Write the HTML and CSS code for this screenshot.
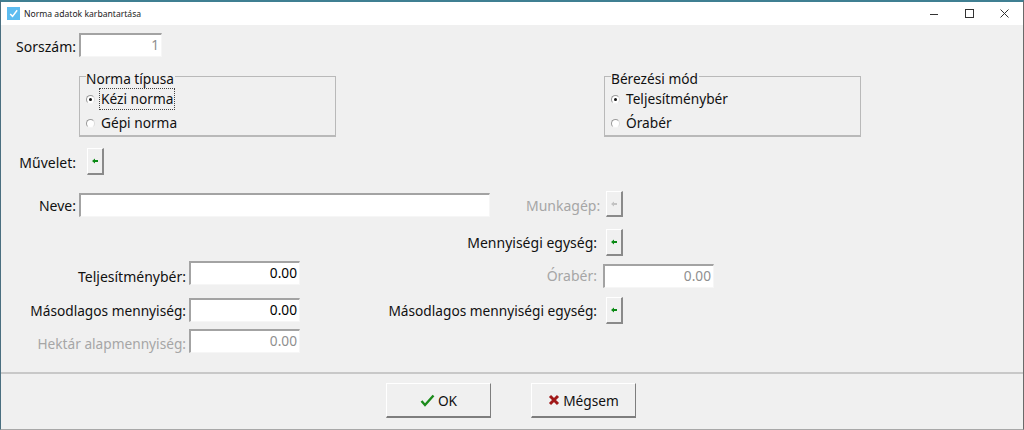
FILE: index.html
```html
<!DOCTYPE html>
<html lang="hu">
<head>
<meta charset="utf-8">
<title>Norma adatok karbantartása</title>
<link rel="stylesheet" href="styles.css">
</head>
<body>
<div class="window">
  <header class="titlebar">
    <svg class="app-icon" width="13" height="13" viewBox="0 0 16 16"><rect width="16" height="16" fill="#5cbcf0"/><path d="M4 8.500l2.800 3L12.500 4" fill="none" stroke="#fff" stroke-width="1.800"/></svg>
    <span class="title">Norma adatok karbantartása</span>
    <div class="winbtns">
      <svg width="12" height="12" viewBox="0 0 12 12"><path d="M1 6.500h8" stroke="#333" fill="none"/></svg>
      <svg width="12" height="12" viewBox="0 0 12 12"><rect x="1.500" y="1.500" width="8" height="8" stroke="#333" fill="none"/></svg>
      <svg width="12" height="12" viewBox="0 0 12 12"><path d="M1.500 1.500l8 8M9.500 1.500l-8 8" stroke="#333" fill="none"/></svg>
    </div>
  </header>
  <main class="form">
    <div class="row row-sorszam">
      <label class="lbl lbl-main">Sorszám:</label>
      <div class="field field-small disabled">1</div>
    </div>
    <div class="groups">
      <div class="group">
        <span class="legend">Norma típusa</span>
        <div class="radio"><span class="dot on"></span><span class="focus">Kézi norma</span></div>
        <div class="radio"><span class="dot"></span><span class="plain">Gépi norma</span></div>
      </div>
      <div class="group">
        <span class="legend">Bérezési mód</span>
        <div class="radio"><span class="dot on"></span><span class="plain">Teljesítménybér</span></div>
        <div class="radio"><span class="dot"></span><span class="plain">Órabér</span></div>
      </div>
    </div>
    <div class="row row-muvelet">
      <label class="lbl lbl-main">Művelet:</label>
      <button class="pick pick-muvelet"><svg class="arrow" width="6" height="6" viewBox="0 0 6 6"><path d="M0 3L3 .5V2H6V4H3V5.500Z"/></svg></button>
    </div>
    <div class="row row-neve">
      <label class="lbl lbl-main">Neve:</label>
      <div class="field field-wide"></div>
      <label class="lbl lbl-right muted">Munkagép:</label>
      <button class="pick"><svg class="arrow off" width="6" height="6" viewBox="0 0 6 6"><path d="M0 3L3 .5V2H6V4H3V5.500Z"/></svg></button>
    </div>
    <div class="lower">
      <div class="col-left">
        <div class="lrow lrow-1">
          <label class="lbl lbl-left">Teljesítménybér:</label>
          <div class="field field-num">0.00</div>
        </div>
        <div class="lrow lrow-2">
          <label class="lbl lbl-left lbl-long">Másodlagos mennyiség:</label>
          <div class="field field-num">0.00</div>
        </div>
        <div class="lrow lrow-3">
          <label class="lbl lbl-left lbl-long muted">Hektár alapmennyiség:</label>
          <div class="field field-num disabled">0.00</div>
        </div>
      </div>
      <div class="col-right">
        <div class="rrow rrow-1">
          <label class="lbl lbl-r">Mennyiségi egység:</label>
          <button class="pick"><svg class="arrow" width="6" height="6" viewBox="0 0 6 6"><path d="M0 3L3 .5V2H6V4H3V5.500Z"/></svg></button>
        </div>
        <div class="rrow rrow-2">
          <label class="lbl lbl-r muted">Órabér:</label>
          <div class="field field-num disabled">0.00</div>
        </div>
        <div class="rrow rrow-3">
          <label class="lbl lbl-r lbl-long">Másodlagos mennyiségi egység:</label>
          <button class="pick"><svg class="arrow" width="6" height="6" viewBox="0 0 6 6"><path d="M0 3L3 .5V2H6V4H3V5.500Z"/></svg></button>
        </div>
      </div>
    </div>
  </main>
  <footer class="footer">
    <button class="btn btn-ok">
      <svg width="15" height="13" viewBox="0 0 15 13"><path d="M1.500 7l3.500 4L13.500 1.500" fill="none" stroke="#1a8a1a" stroke-width="2.400"/></svg>
      <span>OK</span>
    </button>
    <button class="btn btn-cancel">
      <svg width="12" height="12" viewBox="0 0 12 12"><path d="M2 2l8 8M10 2l-8 8" fill="none" stroke="#a01818" stroke-width="3"/></svg>
      <span>Mégsem</span>
    </button>
  </footer>
</div>
</body>
</html>
```
FILE: styles.css
```css
* { box-sizing: border-box; }
html, body { margin: 0; padding: 0; }
body {
  width: 1024px;
  height: 430px;
  overflow: hidden;
  font-family: "Noto Sans", "Open Sans", sans-serif;
  font-size: 13.7px;
  color: #111;
  background: #f0f0f0;
}
.window {
  width: 1024px;
  height: 430px;
  display: flex;
  flex-direction: column;
  border-top: 2px solid #3f7f92;
  border-left: 1px solid #4a6f80;
  border-right: 1px solid #6a6a6a;
  border-bottom: 1px solid #a8a8a8;
}
.titlebar {
  height: 23px;
  flex: none;
  background: #fff;
  display: flex;
  align-items: center;
  padding-left: 6px;
}
.app-icon { flex: none; }
.title {
  margin-left: 4px;
  font-size: 8.6px;
  color: #222;
}
.winbtns {
  margin-left: auto;
  display: flex;
  align-items: center;
  gap: 23px;
  padding-right: 12px;
}
.form {
  flex: 1;
  min-height: 0;
}
.row { display: flex; align-items: flex-start; }
.lbl { white-space: nowrap; line-height: 18px; font-size: 14px; }
.lbl-long { font-size: 13.7px; }
.lbl-main { width: 75px; text-align: right; }
.muted { color: #a6a6a6; }
.row-sorszam { margin-top: 8px; height: 24px; }
.row-sorszam .lbl { margin-top: 5px; }
.field {
  height: 24px;
  background: #fff;
  border-top: 2px solid #a3a3a3;
  border-left: 2px solid #a3a3a3;
  border-right: 1px solid #f6f6f6;
  border-bottom: 1px solid #f6f6f6;
  text-align: right;
  padding-right: 2px;
  line-height: 20px;
  color: #000;
}
.field-small { width: 83px; margin-left: 3px; }
.field-wide { width: 411px; margin-left: 3px; margin-top: 2px; }
.field.disabled { color: #8f8f8f; }
.groups {
  display: flex;
  margin-top: 19px;
  padding-left: 78px;
  gap: 268px;
}
.group {
  width: 257px;
  height: 61px;
  padding: 0 0 0 6px;
  border: 1px solid #b9b9b9;
  border-bottom-width: 2px;
  position: relative;
}
.legend {
  position: absolute;
  left: 6px;
  top: -6px;
  padding: 0 1px 0 0;
  line-height: 16px;
  background: #f0f0f0;
}
.radio {
  display: flex;
  align-items: center;
  height: 24px;
}
.radio:first-of-type { margin-top: 10px; }
.dot {
  width: 9px;
  height: 9px;
  border-radius: 50%;
  background: #fff;
  border: 1px solid;
  border-color: #9a9a9a #dcdcdc #f4f4f4 #9a9a9a;
  flex: none;
  margin-right: 5px;
  position: relative;
}
.dot.on::after {
  content: "";
  position: absolute;
  left: 2px;
  top: 2px;
  width: 3px;
  height: 3px;
  border-radius: 50%;
  background: #111;
}
.focus, .plain { padding: 0 1px; line-height: 20px; }
.focus { outline: 1px dotted #444; outline-offset: 0; }
.pick {
  width: 17px;
  height: 27px;
  padding: 0;
  flex: none;
  background: #f0f0f0;
  border-top: 1px solid #fff;
  border-left: 1px solid #fff;
  border-right: 2px solid #8a8a8a;
  border-bottom: 2px solid #8a8a8a;
  display: flex;
  align-items: center;
  justify-content: center;
}
.arrow { fill: #0a8a14; display: block; }
.arrow.off { fill: #c2c2c2; }
.row-muvelet { margin-top: 11px; height: 27px; }
.row-muvelet .lbl { margin-top: 6px; }
.pick-muvelet { margin-left: 11px; }
.row-neve { margin-top: 16px; height: 26px; }
.row-neve .lbl { margin-top: 6px; }
.row-neve .lbl-right { margin-left: 36px; width: 72px; padding-right: 2px; text-align: right; }
.row-neve .pick { margin-left: 8px; height: 26px; }
.lower { display: flex; }
.col-left { width: 299px; flex: none; }
.col-right { flex: none; }
.lrow { display: flex; height: 24px; align-items: flex-start; }
.lrow .lbl { width: 188px; text-align: right; padding-right: 3px; }
.lrow .field { width: 111px; }
.lrow-1 { margin-top: 44px; }
.lrow-1 .lbl { margin-top: 7px; }
.lrow-2 { margin-top: 13px; }
.lrow-2 .lbl { margin-top: 4px; }
.lrow-3 { margin-top: 7px; }
.lrow-3 .lbl { margin-top: 6px; }
.field-num { width: 111px; }
.rrow { display: flex; align-items: center; }
.rrow .lbl { width: 297px; text-align: right; }
.rrow-1 { margin-top: 12px; height: 27px; }
.rrow-1 .pick, .rrow-3 .pick { margin-left: 9px; }
.rrow-2 { margin-top: 8px; height: 24px; }
.rrow-2 .field { margin-left: 6px; }
.rrow-3 { margin-top: 9px; height: 27px; }
.footer {
  flex: none;
  height: 57px;
  border-top: 2px solid #c8c8c8;
  display: flex;
  justify-content: center;
  align-items: flex-start;
  gap: 40px;
  padding-top: 9px;
  padding-right: 2px;
}
.btn {
  width: 105px;
  height: 35px;
  font: inherit;
  color: #111;
  background: #f0f0f0;
  border-top: 1px solid #fff;
  border-left: 1px solid #fff;
  border-right: 1px solid #7e7e7e;
  border-bottom: 2px solid #7e7e7e;
  display: flex;
  align-items: center;
  justify-content: center;
  gap: 3px;
  padding: 0;
}
```
